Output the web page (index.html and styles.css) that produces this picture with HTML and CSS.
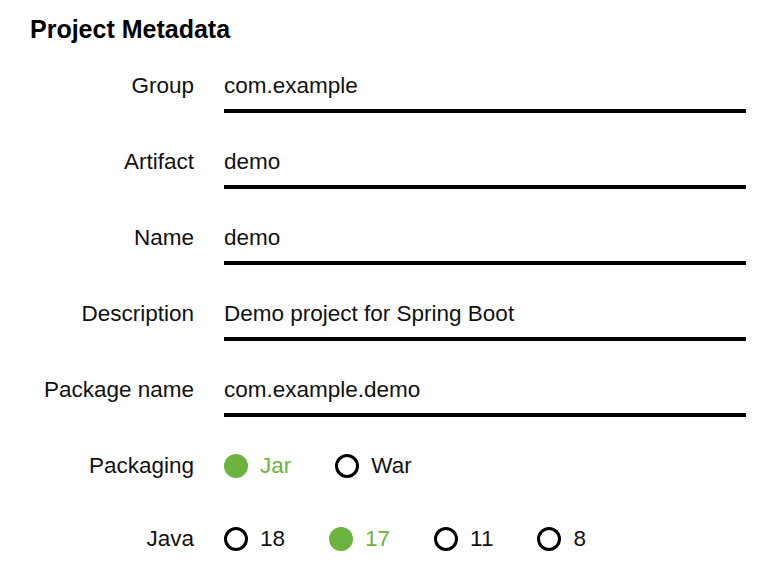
FILE: index.html
```html
<html>
	<head>
		<link rel="stylesheet" href="styles.css">
	</head>
	<body>
		<div id="container">
			<h2 class="title">Project Metadata</h2>
			<div class="row">
				<div class="label">Group</div>
				<div class="field">com.example</div>
			</div>
			<div class="row">
				<div class="label">Artifact</div>
				<div class="field">demo</div>
			</div>
			<div class="row">
				<div class="label">Name</div>
				<div class="field">demo</div>
			</div>
			<div class="row">
				<div class="label">Description</div>
				<div class="field">Demo project for Spring Boot</div>
			</div>
			<div class="row">
				<div class="label">Package name</div>
				<div class="field">com.example.demo</div>
			</div>
			<div class="row radioRow">
				<div class="label">Packaging</div>
				<div class="radios">
					<div class="radio checked"><span class="dot"></span>Jar</div>
					<div class="radio"><span class="dot"></span>War</div>
				</div>
			</div>
			<div class="row radioRow">
				<div class="label">Java</div>
				<div class="radios">
					<div class="radio"><span class="dot"></span>18</div>
					<div class="radio checked"><span class="dot"></span>17</div>
					<div class="radio"><span class="dot"></span>11</div>
					<div class="radio"><span class="dot"></span>8</div>
				</div>
			</div>
		</div>
	</body>
</html>
```
FILE: styles.css
```css
body{
	margin:0;
	background:#fff;
	font-family:"Liberation Sans", Arial, sans-serif;
	color:#111;
}

#container{
	width:716px;
	padding:14px 21px 0 30px;
}

.title{
	margin:0 0 26px 0;
	font-size:25px;
	line-height:31px;
	font-weight:bold;
	color:#000;
}

.row{
	display:flex;
	align-items:flex-start;
	margin-bottom:34px;
}

.label{
	width:164px;
	margin-right:30px;
	padding-top:2px;
	text-align:right;
	font-size:22.5px;
	line-height:26px;
	flex-shrink:0;
}

.field{
	flex:1;
	font-size:22.5px;
	line-height:26px;
	padding:2px 0 10px 0;
	border-bottom:4px solid #000;
}

.radioRow{
	margin-bottom:45px;
}

.radios{
	display:flex;
	gap:44px;
	padding-top:2px;
}

.radio{
	display:flex;
	align-items:center;
	font-size:22.5px;
	line-height:26px;
}

.dot{
	width:18px;
	height:18px;
	border:3px solid #000;
	border-radius:50%;
	margin-right:12px;
}

.checked{
	color:#6db33f;
}

.checked .dot{
	background:#6db33f;
	border-color:#6db33f;
}
```
